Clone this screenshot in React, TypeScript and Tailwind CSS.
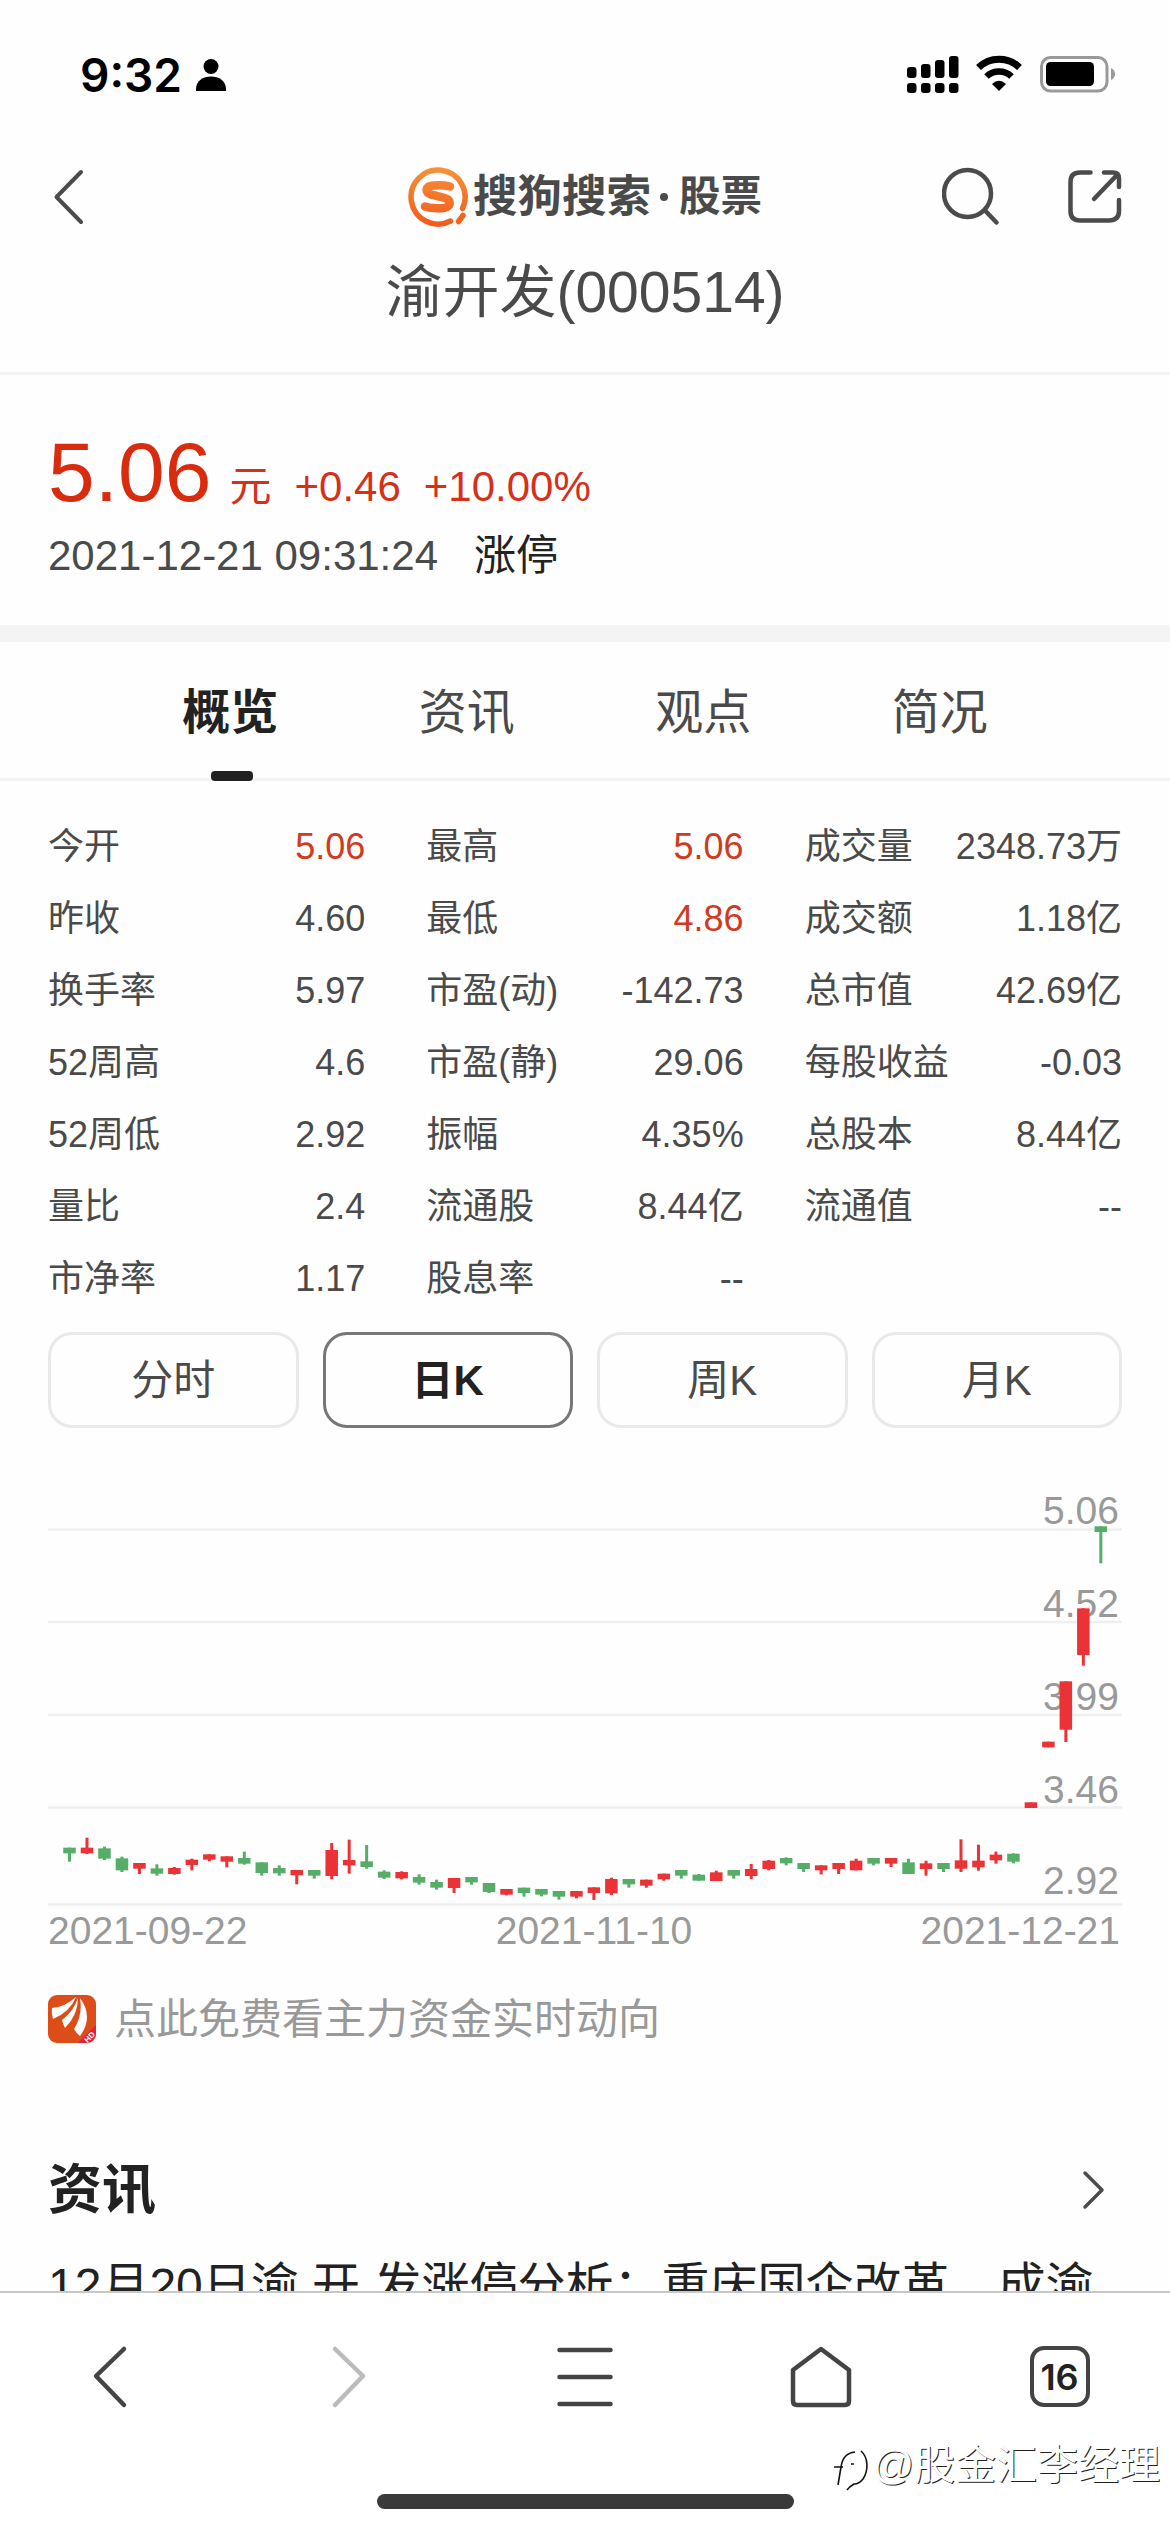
const sans = "font-['Liberation_Sans','Noto_Sans_CJK_SC',sans-serif]";

const stats = [
  ["今开", "5.06", true], ["最高", "5.06", true], ["成交量", "2348.73万", false],
  ["昨收", "4.60", false], ["最低", "4.86", true], ["成交额", "1.18亿", false],
  ["换手率", "5.97", false], ["市盈(动)", "-142.73", false], ["总市值", "42.69亿", false],
  ["52周高", "4.6", false], ["市盈(静)", "29.06", false], ["每股收益", "-0.03", false],
  ["52周低", "2.92", false], ["振幅", "4.35%", false], ["总股本", "8.44亿", false],
  ["量比", "2.4", false], ["流通股", "8.44亿", false], ["流通值", "--", false],
  ["市净率", "1.17", false], ["股息率", "--", false],
] as const;

const tabs = ["概览", "资讯", "观点", "简况"];
const periods = ["分时", "日K", "周K", "月K"];

const priceLines = [
  { label: "5.06", line: 59.5, text: 54 },
  { label: "4.52", line: 152, text: 147 },
  { label: "3.99", line: 245, text: 240 },
  { label: "3.46", line: 337.5, text: 333 },
  { label: "2.92", line: 434.5, text: 424 },
];

// [up, body top, body bottom, wick top, wick bottom], in thirds of a pixel
type Candle = [number, number, number, number, number];
const candles: Candle[] = [
  [0, 1133, 1150, 1133, 1175], [1, 1133, 1150, 1103, 1152], [0, 1135, 1166, 1130, 1170], [0, 1165, 1201, 1160, 1206],
  [1, 1179, 1196, 1179, 1212], [0, 1195, 1211, 1183, 1217], [1, 1194, 1212, 1191, 1214], [1, 1169, 1185, 1166, 1201],
  [1, 1153, 1169, 1153, 1174], [1, 1159, 1175, 1159, 1192], [0, 1164, 1181, 1145, 1184], [0, 1177, 1209, 1177, 1217],
  [0, 1194, 1210, 1186, 1217], [1, 1200, 1216, 1200, 1243], [0, 1200, 1217, 1200, 1226], [1, 1140, 1218, 1119, 1227],
  [1, 1170, 1186, 1109, 1211], [0, 1174, 1191, 1125, 1196], [0, 1205, 1223, 1201, 1227], [1, 1206, 1225, 1204, 1228],
  [0, 1221, 1238, 1213, 1244], [0, 1236, 1253, 1229, 1259], [1, 1224, 1254, 1224, 1269], [0, 1221, 1237, 1221, 1244],
  [0, 1239, 1266, 1239, 1269], [1, 1257, 1274, 1257, 1276], [0, 1253, 1269, 1253, 1280], [0, 1257, 1274, 1257, 1279],
  [0, 1263, 1280, 1263, 1289], [1, 1263, 1280, 1263, 1285], [1, 1252, 1269, 1252, 1290], [1, 1227, 1270, 1223, 1275],
  [0, 1227, 1243, 1227, 1253], [1, 1229, 1247, 1229, 1253], [1, 1211, 1228, 1211, 1232], [0, 1200, 1217, 1200, 1226],
  [0, 1214, 1232, 1212, 1232], [1, 1207, 1233, 1202, 1233], [0, 1200, 1217, 1200, 1226], [1, 1197, 1218, 1182, 1227],
  [1, 1172, 1197, 1170, 1201], [0, 1164, 1180, 1162, 1186], [0, 1179, 1197, 1179, 1206], [1, 1186, 1201, 1186, 1213],
  [1, 1179, 1197, 1179, 1212], [1, 1172, 1201, 1166, 1201], [0, 1164, 1181, 1164, 1186], [1, 1164, 1181, 1164, 1191],
  [0, 1177, 1212, 1166, 1212], [1, 1180, 1197, 1172, 1217], [0, 1179, 1197, 1179, 1206], [1, 1171, 1196, 1108, 1206],
  [1, 1172, 1192, 1124, 1202], [1, 1154, 1171, 1145, 1181], [0, 1151, 1175, 1150, 1180], [1, 997, 1014, 997, 1014],
  [1, 815, 832, 815, 832], [1, 634, 779, 634, 816], [1, 415, 555, 415, 587], [0, 169, 186, 169, 280],
];

function StatusBar() {
  return <div className="flex h-[144px] items-start justify-between pl-[80px] pr-[54px] pt-[45px]">
    <div className="flex items-center gap-[14px] text-black">
      <span className="font-['Inter',sans-serif] text-[46px] font-semibold leading-[60px]">9:32</span>
      <svg className="h-8 w-[30px]" viewBox="0 0 30 32">
        <circle cx="15" cy="7.5" r="7.5" />
        <path d="M0 32V30C0 22 7 17.5 15 17.5S30 22 30 30V32Z" />
      </svg>
    </div>
    <svg className="mt-[10px] h-[38px] w-[209px]" viewBox="0 0 209 38">
      {[12, 9, 5, 1].map((top, i) => <g key={top}>
        <rect x={i * 14} y={top} width="9.5" height={23 - top} rx="3" />
        <rect x={i * 14} y="28" width="9.5" height="10" rx="3" />
      </g>)}
      <g transform="translate(68 0)">
        <path d="M3.5 12.5a29.5 29.5 0 0 1 41 0" fill="none" stroke="#000" strokeWidth="7" />
        <path d="M11.5 21.5a18 18 0 0 1 25 0" fill="none" stroke="#000" strokeWidth="6.5" />
        <path d="M17 29Q24 22.5 31 29L24 36Z" />
      </g>
      <rect x="134.5" y="2.5" width="65.5" height="33.5" rx="9" fill="none" stroke="#999" strokeWidth="3" />
      <rect x="139" y="7" width="48" height="24" rx="4.5" />
      <path d="M204 13Q208 15 208 19T204 25Z" fill="#999" />
    </svg>
  </div>;
}

function Header() {
  return <header className="h-[231px] border-b-[3px] border-[#f3f3f3]">
    <div className="grid h-[106px] grid-cols-[408px_1fr_228px] items-center">
      <svg className="ml-[53px] h-14 w-8" viewBox="0 0 32 56" fill="none" stroke="#4b4b4b" strokeWidth="4" strokeLinecap="round" strokeLinejoin="round">
        <path d="M28 3L3.5 28L28 53" />
      </svg>
      <div className="flex items-center text-[#4a4a4a]">
        <svg className="h-[60px] w-[60px]" viewBox="0 0 60 60" fill="none">
          <defs>
            <linearGradient id="flame" gradientUnits="userSpaceOnUse" x1="0" y1="0" x2="0" y2="60">
              <stop offset="0" stopColor="#f79239" />
              <stop offset="1" stopColor="#f2591c" />
            </linearGradient>
          </defs>
          <path d="M54.5 41.5A27 27 0 1 0 42.5 54" stroke="url(#flame)" strokeWidth="5.5" strokeLinecap="round" />
          <path d="M55 48.5L50.5 54.5" stroke="#f2651f" strokeWidth="5.5" strokeLinecap="round" />
          <path d="M42 19.5C36 18 30 18 25 18.5C17 19 16.5 26 23 27.5L37 31C44 33 43 40 36 41C29 41.5 23 41.5 17 39.5" stroke="url(#flame)" strokeWidth="8.5" strokeLinecap="round" />
        </svg>
        <span className="ml-[5px] text-[44.5px] font-bold leading-[60px]">搜狗搜索</span>
        <span className="mx-[9px] h-2 w-2 rounded-full bg-[#4a4a4a]" />
        <span className="ml-[2px] text-[41.5px] font-bold leading-[60px]">股票</span>
      </div>
      <div className="flex items-center gap-[66px]">
        <svg className="h-[60px] w-[60px]" viewBox="0 0 60 60" fill="none" stroke="#4b4b4b" strokeWidth="4.5" strokeLinecap="round">
          <circle cx="25.5" cy="26.5" r="23.5" />
          <path d="M43 43.5L54.5 55.5" />
        </svg>
        <svg className="h-[56px] w-[56px]" viewBox="0 0 56 56" fill="none" stroke="#4b4b4b" strokeWidth="4.5" strokeLinecap="round" strokeLinejoin="round">
          <path d="M22.5 3.5H12Q2.5 3.5 2.5 13V42Q2.5 51.5 12 51.5H41Q51 51.5 51 42V31" />
          <path d="M36 3.5H45Q51 3.5 51 9.5V18M49 6L26 30" />
        </svg>
      </div>
    </div>
    <h1 className="text-center text-[57px] leading-[84px] text-[#4a4a4a]">渝开发(000514)</h1>
  </header>;
}

function Quote() {
  return <section className="h-[267px] border-b-[17px] border-[#f4f4f4] px-12 pt-[51px]">
    <div className="flex items-baseline text-[42px] leading-[92px] text-[#d5301a]">
      <span className="text-[84px] text-[#d92b0d]">5.06</span>
      <span className="ml-[18px]">元</span>
      <span className="ml-[23px]">+0.46</span>
      <span className="ml-[23px]">+10.00%</span>
    </div>
    <div className="-mt-[7px] flex gap-9 text-[42px] leading-[60px] text-[#4a4a4a]">
      <span>2021-12-21 09:31:24</span>
      <span className="text-[#222]">涨停</span>
    </div>
  </section>;
}

function Tabs() {
  return <nav className="grid h-[139px] grid-cols-4 border-b-[3px] border-[#f3f3f3] px-28">
    {tabs.map((tab, i) => <div key={tab} className="flex flex-col items-center justify-between">
      <span className={i === 0 ? "mt-[38px] text-[48px] font-bold leading-[66px] text-[#222]" : "mt-[38px] text-[48px] leading-[66px] text-[#4a4a4a]"}>{tab}</span>
      {i === 0 ? <span className="-mb-[3px] ml-1 h-[10px] w-[42px] rounded-[4px] bg-[#222]" /> : null}
    </div>)}
  </nav>;
}

function KLineChart() {
  return <svg className="mt-[42px] block h-[484px] w-[1170px]" viewBox="0 0 1170 484" fontFamily="'Liberation Sans', sans-serif" fontSize="39" fill="#999">
    {priceLines.map((row) => <g key={row.label}>
      <path d={`M48 ${row.line}H1122`} stroke="#efefef" strokeWidth="2.5" />
      <text x="1119" y={row.text} textAnchor="end">{row.label}</text>
    </g>)}
    <text x="48" y="474">2021-09-22</text>
    <text x="594" y="474" textAnchor="middle">2021-11-10</text>
    <text x="1120" y="474" textAnchor="end">2021-12-21</text>
    {candles.map(([up, top, bottom, high, low], i) => {
      const x = 69.5 + i * 17.48;
      return <g key={i} fill={up ? "#eb3236" : "#55ad68"}>
        <rect x={x - 1.5} y={high / 3} width="3" height={(low - high) / 3} />
        <rect x={x - 6.25} y={top / 3} width="12.5" height={(bottom - top) / 3} />
      </g>;
    })}
  </svg>;
}

function BottomBar() {
  return <footer className="relative h-[241px] border-t-2 border-[#c8c8c8] bg-white">
    <div className="grid h-[167px] grid-cols-[219px_260px_212px_260px_219px] items-center justify-items-center">
      <svg className="h-16 w-9" viewBox="0 0 36 64" fill="none" stroke="#444" strokeWidth="4.5" strokeLinecap="round" strokeLinejoin="round"><path d="M32 4L4 31L32 60" /></svg>
      <svg className="h-16 w-9" viewBox="0 0 36 64" fill="none" stroke="#bbb" strokeWidth="4.5" strokeLinecap="round" strokeLinejoin="round"><path d="M4 4L32 31L4 60" /></svg>
      <svg className="h-16 w-14" viewBox="0 0 56 64" stroke="#444" strokeWidth="4.5" strokeLinecap="round"><path d="M2.5 5H53.5M2.5 32H53.5M2.5 59H53.5" /></svg>
      <svg className="h-16 w-16" viewBox="0 0 64 64" fill="none" stroke="#444" strokeWidth="4.5" strokeLinejoin="round"><path d="M4 25L32 4L60 25V56Q60 60 56 60H8Q4 60 4 56Z" /></svg>
      <div className="mr-[2px] flex h-[61px] w-[60px] items-center justify-center rounded-[14px] border-4 border-[#444] font-['Inter',sans-serif] text-[36px] font-semibold text-[#222]">16</div>
    </div>
    <div className="mx-auto mt-[34px] h-[15px] w-[417px] rounded-full bg-[#3a3a3a]" />
    <div className="absolute right-[10px] top-[146px] flex items-center text-[41px] leading-[50px] text-white [text-shadow:1px_1px_0_#222]">
      <svg className="mt-2 h-[44px] w-[38px]" viewBox="0 0 38 44" fill="none" stroke="#111" strokeWidth="1.6">
        <path d="M0 20H7Q9 6 21 5M7 20L4 38M7 20H9M17 17H20" />
        <path d="M27 4C34 10 35 23 29 32Q25 37 20 37Q15 40 13 43" />
      </svg>
      <span>@股金汇李经理</span>
    </div>
  </footer>;
}

export default function App() {
  return <div className={`flex h-[2532px] w-[1170px] flex-col overflow-hidden bg-[#fefefe] ${sans}`}>
    <StatusBar />
    <Header />
    <Quote />
    <Tabs />
    <main className="h-[1510px] overflow-hidden">
      <dl className="mt-[30px] grid grid-cols-3 gap-x-[61px] px-12">
        {stats.map(([label, value, rise]) => <div key={label} className="flex h-[72px] items-center justify-between whitespace-nowrap text-[36px] text-[#4a4a4a]">
          <dt>{label}</dt>
          <dd className={rise ? "text-[#cf3a20]" : ""}>{value}</dd>
        </div>)}
      </dl>
      <div className="mt-[17px] grid grid-cols-4 gap-6 px-12">
        {periods.map((period, i) => <button key={period} className={i === 1
          ? "h-24 rounded-[24px] border-[3px] border-[#777] text-[42px] font-bold text-[#222]"
          : "h-24 rounded-[24px] border-[3px] border-[#e9e9e9] text-[42px] text-[#4a4a4a]"}>{period}</button>)}
      </div>
      <KLineChart />
      <div className="mt-[41px] flex h-12 items-center gap-[18px] px-12 text-[42px] text-[#999]">
        <svg className="h-12 w-12" viewBox="0 0 48 48">
          <defs><clipPath id="appIcon"><rect width="48" height="48" rx="9" /></clipPath></defs>
          <g clipPath="url(#appIcon)">
            <rect width="48" height="48" fill="#dc4d18" />
            <path d="M30 48L48 30V48Z" fill="#e0203c" />
            <g fill="#fff">
              <path d="M4 13Q17 12 28 2Q22 17 5 24Q3 18 4 13Z" />
              <path d="M30 3Q30 20 17 33Q15 29 14 25Q25 17 30 3Z" />
              <path d="M32 3Q46 22 32 41Q29 39 26 34Q35 20 32 3Z" />
            </g>
          </g>
          <text x="41.5" y="45" fontSize="8" fontWeight="bold" fill="#fff" textAnchor="middle" transform="rotate(-45 41.5 42)">HD</text>
        </svg>
        <span>点此免费看主力资金实时动向</span>
      </div>
      <div className="mt-[107px] flex h-20 items-center justify-between pl-12 pr-16">
        <h2 className="text-[54px] font-bold text-[#222]">资讯</h2>
        <svg className="h-10 w-6" viewBox="0 0 24 40" fill="none" stroke="#4b4b4b" strokeWidth="3.5" strokeLinecap="round" strokeLinejoin="round"><path d="M3 3L20 20L3 37" /></svg>
      </div>
      <p className="mt-[23px] whitespace-nowrap pl-12 text-[48px] leading-[66px] text-[#222]">12月20日渝 开 发涨停分析：重庆国企改革，成渝</p>
    </main>
    <BottomBar />
  </div>;
}
